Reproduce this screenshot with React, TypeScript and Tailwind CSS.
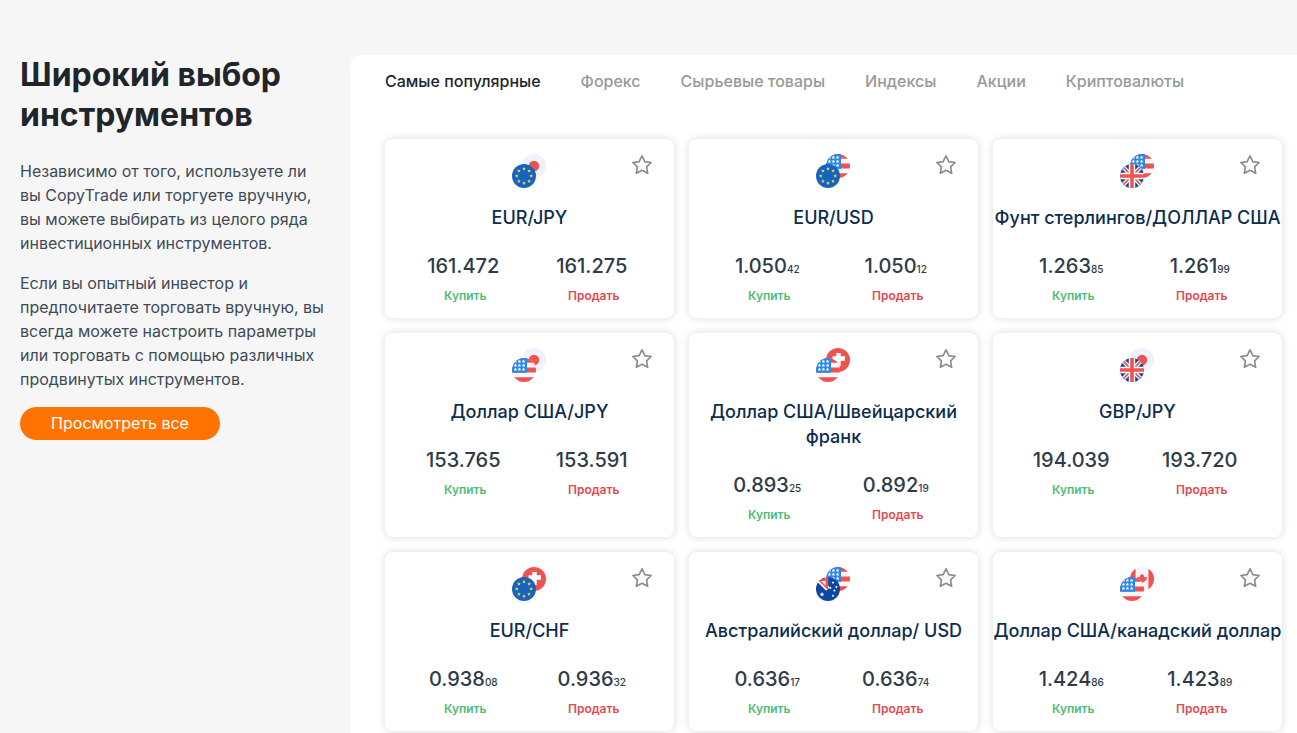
import React, { useState } from 'react';

type FlagCode = 'eu' | 'jp' | 'us' | 'gb' | 'ch' | 'au' | 'ca';

interface Price {
  main: string;
  small?: string;
}

interface Instrument {
  name: string;
  front: FlagCode;
  back: FlagCode;
  buy: Price;
  sell: Price;
}

const TABS = ['Самые популярные', 'Форекс', 'Сырьевые товары', 'Индексы', 'Акции', 'Криптовалюты'];

const INSTRUMENTS: Instrument[] = [
  { name: 'EUR/JPY', front: 'eu', back: 'jp', buy: { main: '161.472' }, sell: { main: '161.275' } },
  { name: 'EUR/USD', front: 'eu', back: 'us', buy: { main: '1.050', small: '42' }, sell: { main: '1.050', small: '12' } },
  { name: 'Фунт стерлингов/ДОЛЛАР США', front: 'gb', back: 'us', buy: { main: '1.263', small: '85' }, sell: { main: '1.261', small: '99' } },
  { name: 'Доллар США/JPY', front: 'us', back: 'jp', buy: { main: '153.765' }, sell: { main: '153.591' } },
  { name: 'Доллар США/Швейцарский франк', front: 'us', back: 'ch', buy: { main: '0.893', small: '25' }, sell: { main: '0.892', small: '19' } },
  { name: 'GBP/JPY', front: 'gb', back: 'jp', buy: { main: '194.039' }, sell: { main: '193.720' } },
  { name: 'EUR/CHF', front: 'eu', back: 'ch', buy: { main: '0.938', small: '08' }, sell: { main: '0.936', small: '32' } },
  { name: 'Австралийский доллар/ USD', front: 'au', back: 'us', buy: { main: '0.636', small: '17' }, sell: { main: '0.636', small: '74' } },
  { name: 'Доллар США/канадский доллар', front: 'us', back: 'ca', buy: { main: '1.424', small: '86' }, sell: { main: '1.423', small: '89' } },
];

const STAR = 'M0-1.5.42-.5 1.45-.45.65.2.9 1.2 0 .65-.9 1.2-.65.2-1.45-.45-.42-.5Z';

const FLAGS: Record<FlagCode, React.ReactNode> = {
  eu: (
    <>
      <rect width="24" height="24" fill="#1565c0" />
      {[0, 45, 90, 135, 180, 225, 270, 315].map(a => (
        <path key={a} d={STAR} fill="#fdd835" transform={`rotate(${a} 12 12) translate(12 4.8) rotate(${-a}) scale(1.3)`} />
      ))}
    </>
  ),
  jp: (
    <>
      <rect width="24" height="24" fill="#eff2fa" />
      <circle cx="12" cy="12" r="5.2" fill="#ef5350" />
    </>
  ),
  us: (
    <>
      <rect width="24" height="24" fill="#f5f7fb" />
      <path d="M0 0h24v4.8H0zM0 9.6h24v4.8H0zM0 19.2h24V24H0z" fill="#ef5350" />
      <path d="M0 0h15v14.8H0z" fill="#2b87e3" />
      {[3.4, 7.4, 11.4].map(y =>
        [3.4, 7.4, 11.6].map(x => (
          <path key={`${x}-${y}`} d={STAR} fill="#fff" transform={`translate(${x} ${y}) scale(1.25)`} />
        ))
      )}
    </>
  ),
  gb: (
    <>
      <rect width="24" height="24" fill="#0d47a1" />
      <path d="M0 0l24 24M24 0L0 24" stroke="#fff" strokeWidth="4.2" />
      <path d="M0 0l24 24M24 0L0 24" stroke="#ef5350" strokeWidth="1.7" />
      <path d="M12 0v24M0 12h24" stroke="#fff" strokeWidth="6.4" />
      <path d="M12 0v24M0 12h24" stroke="#ef5350" strokeWidth="3.6" />
    </>
  ),
  ch: (
    <>
      <rect width="24" height="24" fill="#ef5350" />
      <path d="M12.5 5v13M6.5 10.5h12.5" stroke="#fff" strokeWidth="4.4" />
    </>
  ),
  au: (
    <>
      <rect width="24" height="24" fill="#0d47a1" />
      <path d="M0 0l12 12" stroke="#fff" strokeWidth="5" />
      <path d="M10.4 0v12M0 4h12" stroke="#fff" strokeWidth="3.4" />
      <path d="M10.8 0v11M0 2.8h12" stroke="#ef5350" strokeWidth="2.4" />
      <path d="M3 3l9 9" stroke="#ef5350" strokeWidth="1.6" />
      <path d={STAR} fill="#fff" transform="translate(6 17.4) scale(1.6)" />
      {[[17, 5.5], [14.4, 11], [20.4, 10], [18.4, 13.6], [17, 18.8]].map(([x, y]) => (
        <path key={`${x}-${y}`} d={STAR} fill="#fff" transform={`translate(${x} ${y})`} />
      ))}
    </>
  ),
  ca: (
    <>
      <rect width="24" height="24" fill="#f3f5fb" />
      <path d="M0 0h5.6v24H0zM18.4 0H24v24h-5.6z" fill="#ef5350" />
      <path
        d="M12 6.6l1.1 2 1.1-.6-.4 2.8 1.2-1.3.4.8 1.7-.2-.6 1.6.7.5-3 2.4.3 1-2.2-.3v2h-.6v-2l-2.2.3.3-1-3-2.4.7-.5-.6-1.6 1.7.2.4-.8 1.2 1.3-.4-2.8 1.1.6z"
        fill="#ef5350"
      />
    </>
  ),
};

const Flag: React.FC<{ code: FlagCode }> = ({ code }) => (
  <svg viewBox="0 0 24 24" className="size-6 rounded-full" aria-hidden="true">
    {FLAGS[code]}
  </svg>
);

const Quote: React.FC<{ price: Price; children: React.ReactNode }> = ({ price, children }) => (
  <div className="flex flex-1 flex-col items-center">
    <div className="h-[30px] pr-1 text-xl leading-[30px] font-medium text-[#2f3b48]">
      {price.main}
      {price.small && <span className="text-[10px]">{price.small}</span>}
    </div>
    {children}
  </div>
);

const InstrumentCard: React.FC<{ item: Instrument }> = ({ item }) => {
  const [isFavorite, setIsFavorite] = useState(false);

  return (
    <article className="relative rounded-lg bg-white pt-[15px] pb-[13px] shadow-[0_0_8px_rgba(0,0,0,0.15)]">
      <button
        onClick={() => setIsFavorite(!isFavorite)}
        aria-pressed={isFavorite}
        className={`absolute top-[15px] right-[21px] cursor-pointer ${isFavorite ? 'text-[#ff7400]' : 'text-[#8b8b8b]'}`}
      >
        <svg viewBox="0 0 24 24" fill="none" stroke="currentColor" strokeWidth="1.8" strokeLinejoin="round" className="size-[22px]">
          <path d="M12 2l3.09 6.26L22 9.27l-5 4.87 1.18 6.88L12 17.77l-6.18 3.25L7 14.14 2 9.27l6.91-1.01z" />
        </svg>
      </button>
      <div className="relative mx-auto h-[34px] w-9">
        <div className="absolute top-0 left-2.5">
          <Flag code={item.back} />
        </div>
        <div className="absolute bottom-0 left-0">
          <Flag code={item.front} />
        </div>
      </div>
      <h3 className="mt-[17px] text-center text-lg leading-[25px] font-medium text-[#0c2d4e]">{item.name}</h3>
      <div className="mt-[21px] flex px-4">
        <Quote price={item.buy}>
          <button className="mt-1.5 cursor-pointer text-xs leading-[18px] font-semibold text-[#4dbd74]">Купить</button>
        </Quote>
        <Quote price={item.sell}>
          <button className="mt-1.5 cursor-pointer text-xs leading-[18px] font-semibold text-[#e5484d]">Продать</button>
        </Quote>
      </div>
    </article>
  );
};

const App: React.FC = () => {
  const [activeTab, setActiveTab] = useState(TABS[0]);

  return (
    <div className="flex min-h-screen bg-[#f6f6f6] pt-[55px] font-['Inter',sans-serif]">
      <aside className="w-[350px] shrink-0 pr-6 pl-5">
        <h2 className="text-[32px] leading-10 font-bold text-[#212529]">Широкий выбор инструментов</h2>
        <div className="mt-6 flex flex-col gap-4 text-base text-[#3f4b57]">
          <p>
            Независимо от того, используете ли вы CopyTrade или торгуете вручную, вы можете выбирать из целого ряда
            инвестиционных инструментов.
          </p>
          <p>
            Если вы опытный инвестор и предпочитаете торговать вручную, вы всегда можете настроить параметры или
            торговать с помощью различных продвинутых инструментов.
          </p>
        </div>
        <a
          href="#instruments"
          className="mt-4 flex h-[33px] w-[200px] items-center justify-center rounded-full bg-[#ff7400] pb-0.5 text-base text-white"
        >
          Просмотреть все
        </a>
      </aside>

      <main id="instruments" className="min-w-0 flex-1 rounded-tl-xl bg-white pt-3.5 pr-[15px] pl-[35px]">
        <nav className="flex gap-10">
          {TABS.map(tab => (
            <button
              key={tab}
              onClick={() => setActiveTab(tab)}
              className={`cursor-pointer text-base font-medium ${tab === activeTab ? 'text-[#212529]' : 'text-[#999]'}`}
            >
              {tab}
            </button>
          ))}
        </nav>
        <div className="mt-[46px] grid grid-cols-3 gap-[15px]">
          {INSTRUMENTS.map(item => (
            <InstrumentCard key={item.name} item={item} />
          ))}
        </div>
      </main>
    </div>
  );
};

export default App;
